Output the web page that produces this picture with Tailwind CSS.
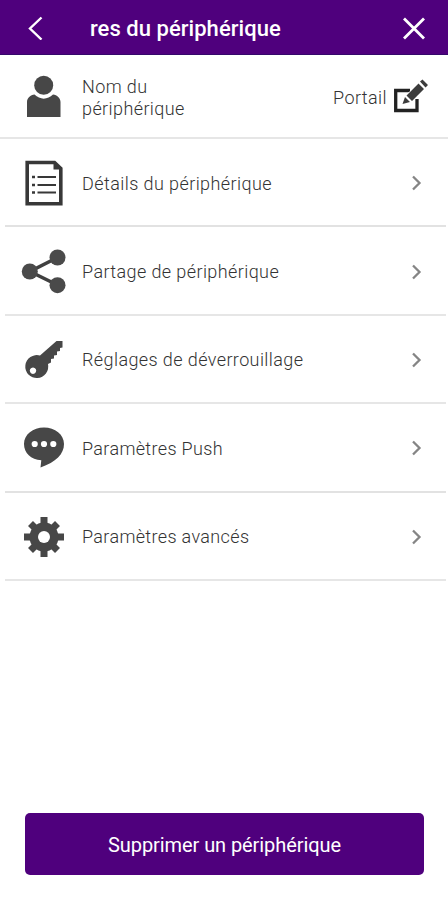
<!DOCTYPE html>
<html lang="fr">

<head>
    <meta charset="UTF-8">
    <meta name="viewport" content="width=device-width, initial-scale=1.0">
    <title>Paramètres du périphérique</title>
    <script src="https://cdn.jsdelivr.net/npm/@tailwindcss/browser@4"></script>
</head>

<body class="bg-white font-['Roboto',sans-serif] text-[#333]">
    <div class="flex h-[900px] w-[448px] flex-col overflow-hidden">

        <!-- Header -->
        <header class="flex h-[55px] shrink-0 items-center border-b border-[#35086b] bg-[#4f007d] text-white">
            <button class="ml-[24px] mt-px h-6 w-6" aria-label="Retour">
                <svg class="h-6 w-6" viewBox="0 0 24 24" fill="none" stroke="currentColor" stroke-width="2.4">
                    <path d="M17.5 1.5 6 12.5l11.5 11" />
                </svg>
            </button>
            <h1 class="ml-[42px] mt-[4px] flex-1 whitespace-nowrap text-[22px] font-medium leading-7 tracking-[0.04px]">res du périphérique</h1>
            <button class="mr-[22px] mt-px h-6 w-6" aria-label="Fermer">
                <svg class="h-6 w-6" viewBox="0 0 24 24" fill="none" stroke="currentColor" stroke-width="2.8">
                    <path d="m2 2.500 20 20M22 2.500l-20 20" />
                </svg>
            </button>
        </header>

        <main>
            <!-- Device name -->
            <div class="flex h-[84px] items-center border-b-2 border-[#e6e6e6] pl-5 pt-[2px]">
                <svg class="h-12 w-12 shrink-0" viewBox="0 0 48 48" fill="#474747">
                    <circle cx="23.700" cy="12.300" r="9.500" />
                    <path d="M7 44V29c0-4 3.500-7 7.500-7.500 5.500 5.500 13 5.500 18.500 0 4 .5 7.500 3.500 7.500 7.500v15z" />
                </svg>
                <p class="ml-[14px] mt-[2px] w-[150px] text-[18px] font-light leading-[22px] tracking-[0.4px]">Nom du<br>périphérique</p>
                <span class="ml-auto text-[18px] font-light tracking-[0.4px]">Portail</span>
                <svg class="ml-[6px] mr-[19px] h-9 w-9" viewBox="0 0 36 36">
                    <path d="M17 11.500H2.700v20H24V20" fill="none" stroke="#222" stroke-width="3.300" />
                    <path d="M9.500 25.500l3-9.500L27 3.500l6 6.500-14.500 12.500z" fill="#fff" />
                    <path d="m9.500 25 2.500-7 5 5zM13.500 16.500 25.500 4.500l5.500 5.500-12 12zM27 2.500 29.500.5l5.500 5.500-2.500 2.500z" fill="#3c3c3c" />
                </svg>
            </div>

            <!-- Menu -->
            <ul class="ml-[5px] mr-[2px]">
                <li class="flex h-[88.4px] items-center border-b-2 border-[#e2e2e2] pl-[15px] pt-[2px]">
                    <svg class="h-12 w-12 shrink-0" viewBox="0 0 48 48">
                        <path d="M7.200 3.500h27.300l6.300 6v35.300H7.200z" fill="none" stroke="#383838" stroke-width="3.600" />
                        <path d="M33.500 2v8.500H42z" fill="#383838" />
                        <path d="M17.500 18H36M17.500 26H36M17.500 33.500H36" stroke="#383838" stroke-width="2.200" />
                        <path d="M12 18h3M12 26h3M12 33.500h3" stroke="#383838" stroke-width="2.600" />
                    </svg>
                    <span class="ml-[14px] flex-1 text-[18px] font-light tracking-[0.42px]">Détails du périphérique</span>
                    <svg class="mr-[21px] h-4 w-4" viewBox="0 0 16 16" fill="none" stroke="#858585" stroke-width="2.300"><path d="M4 1.500 10.500 8 4 14.500" /></svg>
                </li>
                <li class="flex h-[88.4px] items-center border-b-2 border-[#e6e6e6] pl-[15px] pt-[2px]">
                    <svg class="h-12 w-12 shrink-0" viewBox="0 0 48 48" fill="#4a4a4a">
                        <path d="M37.500 9.500 10 23.500l27.500 13.500" fill="none" stroke="#404040" stroke-width="3.600" />
                        <circle cx="37.500" cy="9.500" r="8" />
                        <circle cx="9.800" cy="23.500" r="8" />
                        <circle cx="37.500" cy="37.200" r="8" />
                    </svg>
                    <span class="ml-[14px] flex-1 text-[18px] font-light tracking-[0.4px]">Partage de périphérique</span>
                    <svg class="mr-[21px] h-4 w-4" viewBox="0 0 16 16" fill="none" stroke="#858585" stroke-width="2.300"><path d="M4 1.500 10.500 8 4 14.500" /></svg>
                </li>
                <li class="flex h-[88.4px] items-center border-b-2 border-[#e6e6e6] pl-[15px] pt-[2px]">
                    <svg class="h-12 w-12 shrink-0" viewBox="0 0 48 48" fill="#474747">
                        <path fill-rule="evenodd" d="M36.500 5H42.500V11.500L40 12v3l-3 .5v3.500l-3 .5v3l-3 .5v3.500l-3 1.500A11.500 11.500 0 1 1 20 19.500zM13 31.500a3.200 3.200 0 1 0 .01 0z" />
                    </svg>
                    <span class="ml-[14px] flex-1 text-[18px] font-light tracking-[0.4px]">Réglages de déverrouillage</span>
                    <svg class="mr-[21px] h-4 w-4" viewBox="0 0 16 16" fill="none" stroke="#858585" stroke-width="2.300"><path d="M4 1.500 10.500 8 4 14.500" /></svg>
                </li>
                <li class="flex h-[88.4px] items-center border-b-2 border-[#e2e2e2] pl-[15px] pt-[2px]">
                    <svg class="h-12 w-12 shrink-0" viewBox="0 0 48 48" fill="#474747">
                        <path d="M24 3.500C35 3.500 44 10.500 44 20c0 10-8 18-23.500 23.500l.8-7.200C11 35.500 4 29 4 20 4 10.500 13 3.500 24 3.500z" />
                        <g fill="#fff">
                            <circle cx="14.700" cy="20" r="3.100" />
                            <circle cx="24" cy="20" r="3.100" />
                            <circle cx="33.300" cy="20" r="3.100" />
                        </g>
                    </svg>
                    <span class="ml-[14px] flex-1 text-[18px] font-light tracking-[0.35px]">Paramètres Push</span>
                    <svg class="mr-[21px] h-4 w-4" viewBox="0 0 16 16" fill="none" stroke="#858585" stroke-width="2.300"><path d="M4 1.500 10.500 8 4 14.500" /></svg>
                </li>
                <li class="flex h-[88.4px] items-center border-b-2 border-[#e6e6e6] pl-[15px] pt-[2px]">
                    <svg class="h-12 w-12 shrink-0" viewBox="0 0 48 48">
                        <path d="M24 4v40M4 24h40M10.500 10.500l27 27M37.500 10.500l-27 27" stroke="#474747" stroke-width="7" />
                        <circle cx="24" cy="24" r="14.500" fill="#474747" />
                        <circle cx="24" cy="24" r="6" fill="#fff" />
                    </svg>
                    <span class="ml-[14px] flex-1 text-[18px] font-light tracking-[0.35px]">Paramètres avancés</span>
                    <svg class="mr-[21px] h-4 w-4" viewBox="0 0 16 16" fill="none" stroke="#858585" stroke-width="2.300"><path d="M4 1.500 10.500 8 4 14.500" /></svg>
                </li>
            </ul>
        </main>

        <!-- Delete button -->
        <button class="mx-[25px] mb-[25px] mt-auto h-[62px] w-[399px] rounded-[5px] bg-[#4f007d] pt-[2px] text-[20px] tracking-[-0.08px] text-white">Supprimer un périphérique</button>
    </div>
</body>

</html>
